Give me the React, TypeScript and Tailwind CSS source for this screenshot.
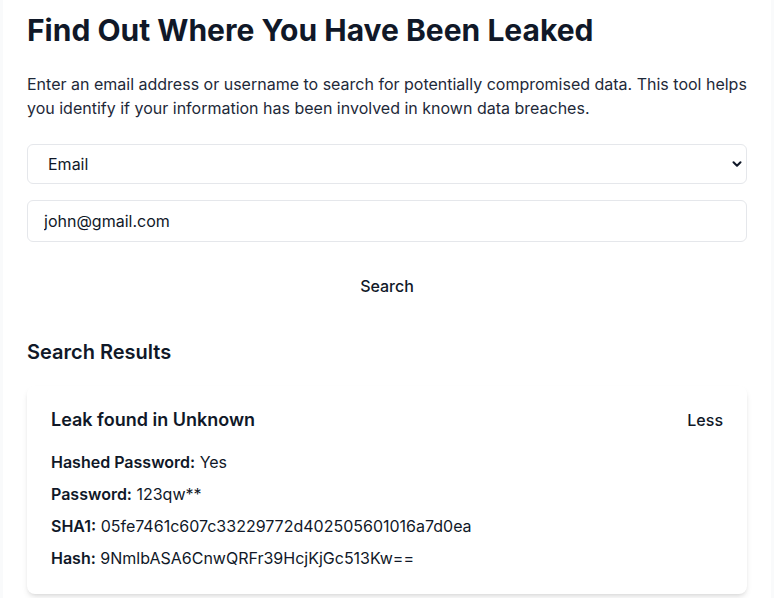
import { ChevronDown } from 'lucide-react';
import { useState } from 'react';

type Leak = {
  source: string;
  hashed: boolean;
  password: string;
  sha1: string;
  hash: string;
};

const results: Leak[] = [
  {
    source: 'Unknown',
    hashed: true,
    password: '123qw**',
    sha1: '05fe7461c607c33229772d402505601016a7d0ea',
    hash: '9NmlbASA6CnwQRFr39HcjKjGc513Kw==',
  },
];

function ResultCard({ leak }: { leak: Leak }) {
  const [open, setOpen] = useState(true);
  return (
    <div className="rounded-lg bg-white px-6 pt-5 pb-6 shadow-md">
      <div className="flex items-center justify-between">
        <h3 className="text-lg leading-7 font-semibold text-gray-900">
          Leak found in {leak.source}
        </h3>
        <button
          type="button"
          className="font-medium text-gray-900"
          onClick={() => setOpen((v) => !v)}
        >
          {open ? 'Less' : 'More'}
        </button>
      </div>
      {open ? (
        <div className="mt-4 space-y-2 text-gray-900">
          <p>
            <span className="font-semibold">Hashed Password:</span>{' '}
            {leak.hashed ? 'Yes' : 'No'}
          </p>
          <p>
            <span className="font-semibold">Password:</span> {leak.password}
          </p>
          <p>
            <span className="font-semibold">SHA1:</span> {leak.sha1}
          </p>
          <p>
            <span className="font-semibold">Hash:</span> {leak.hash}
          </p>
        </div>
      ) : null}
    </div>
  );
}

export default function App() {
  const [type, setType] = useState('email');
  const [query, setQuery] = useState('john@gmail.com');

  return (
    <div className="min-h-screen bg-gray-50 font-['Inter',sans-serif] text-gray-900">
      <div className="mx-auto min-h-screen max-w-3xl bg-white px-6 pt-3 pb-6">
        <h1 className="text-3xl leading-9 font-bold text-gray-900">
          Find Out Where You Have Been Leaked
        </h1>
        <p className="mt-6 text-base leading-6 text-gray-800">
          Enter an email address or username to search for potentially
          compromised data. This tool helps you identify if your information
          has been involved in known data breaches.
        </p>

        <div className="relative mt-6">
          <select
            value={type}
            onChange={(e) => setType(e.target.value)}
            className="h-10 w-full appearance-none rounded-md border border-gray-200 bg-white pl-5 pr-8 text-base text-gray-900 outline-none"
          >
            <option value="email">Email</option>
            <option value="username">Username</option>
          </select>
          <ChevronDown
            className="pointer-events-none absolute top-1/2 right-[3px] h-[14px] w-[14px] -translate-y-1/2 text-gray-900"
            strokeWidth={3.5}
            aria-hidden
          />
        </div>

        <input
          value={query}
          onChange={(e) => setQuery(e.target.value)}
          className="mt-4 h-[42px] w-full rounded-md border border-gray-200 bg-white px-4 text-base text-gray-900 outline-none"
        />

        <button
          type="button"
          className="mt-6 h-10 w-full bg-white text-base font-medium text-gray-900"
        >
          Search
        </button>

        <h2 className="mt-8 text-xl leading-7 font-semibold text-gray-900">
          Search Results
        </h2>
        <div className="mt-5 space-y-4">
          {results.map((leak) => (
            <ResultCard key={leak.sha1} leak={leak} />
          ))}
        </div>
      </div>
    </div>
  );
}
